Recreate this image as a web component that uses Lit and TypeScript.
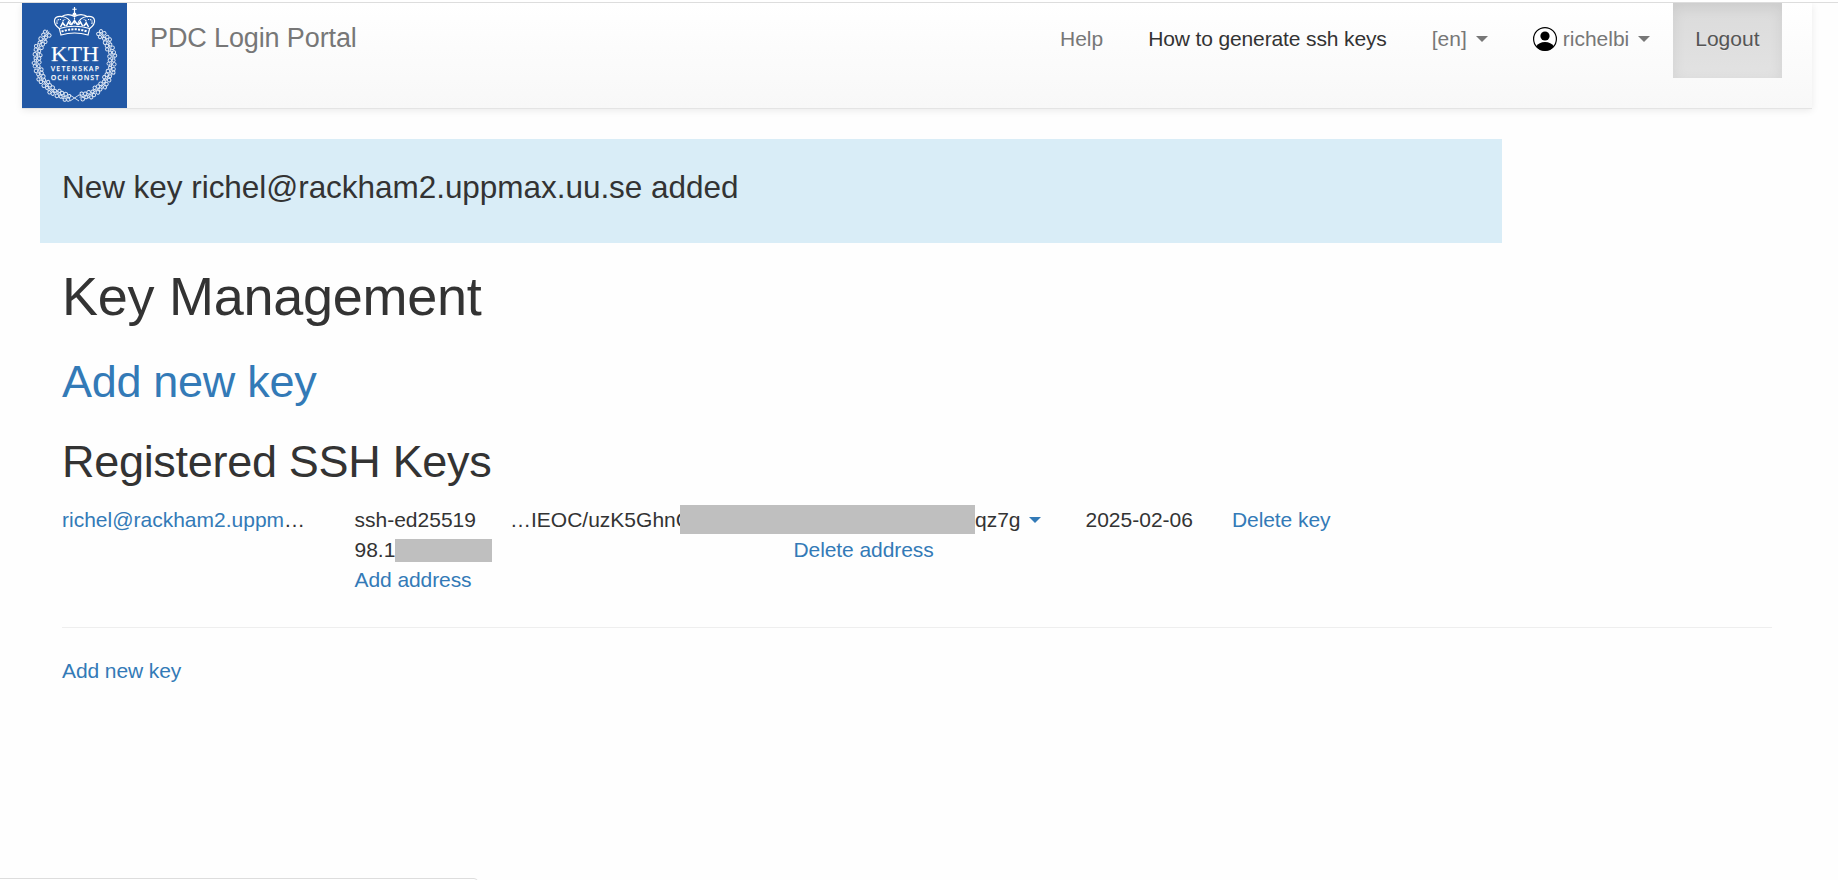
import { LitElement, html, css, svg } from "lit";
import { customElement } from "lit/decorators.js";

@customElement("kth-logo")
class KthLogo extends LitElement {
  static styles = css`
    :host { display: block; width: 105px; height: 105px; }
    svg { display: block; }
    .name { font-family: "Liberation Serif", serif; font-size: 21.5px; }
    .motto { font-family: "Open Sans", sans-serif; font-size: 7.1px; font-weight: 600; }
  `;

  private leaf(deg: number, i: number) {
    const a = (deg * Math.PI) / 180;
    const x = 52.5 + 37.6 * Math.cos(a);
    const y = 57 + 37.6 * Math.sin(a);
    return svg`
      <g transform="translate(${x} ${y}) rotate(${deg + 90}) scale(1 ${i % 2 ? 1 : -1})">
        <circle cx="-2.800" cy="-2.400" r="1.700" />
        <circle cx="0.600" cy="-3.300" r="1.600" />
        <circle cx="-3" cy="1.400" r="1.500" />
        <circle cx="0.800" cy="2.400" r="1.800" />
        <path d="M-4 -0.400L3.500 -0.200M1.500 -1.400L3.600 -2.800" />
      </g>`;
  }

  render() {
    const half = [-43, -31, -19, -7, 5, 17, 29, 41, 53, 65, 77];
    const angles = [...half, ...half.map((d) => 180 - d)];
    return html`<svg width="105" height="105" viewBox="0 0 105 105">
      <rect width="105" height="105" fill="#2258a5" />
      <g fill="none" stroke="#dfe8f4" stroke-width="0.95">${angles.map((d, i) => this.leaf(d, i))}
        <path d="M48 92L57 98M57 92L48 98" />
      </g>
      <g fill="none" stroke="#fff" stroke-width="1.1" transform="translate(52.500 4) scale(1.080 1) translate(-52.500 -4)">
        <path d="M52.500 4v6M50.500 6.200h4" />
        <circle cx="52.500" cy="11.200" r="1.800" fill="#fff" stroke="none" />
        <path d="M39 26C31 20 33 12.500 41 13.500Q48 14.500 50 22M66 26C74 20 72 12.500 64 13.500Q57 14.500 55 22" />
        <path d="M40 14Q46 9.500 52.500 13.500Q59 9.500 65 14" stroke-width="1.400" />
        <path d="M36.500 21Q35 16 40 16.500M68.500 21Q70 16 65 16.500M43 22Q40 17 44 16.500M62 22Q65 17 61 16.500M52.500 13V21" stroke-dasharray="1.400 0.700" />
        <path d="M38.500 25.500Q52.500 21 66.500 25.500L65 32Q52.500 28 40 32Z" />
        <path d="M40.500 28.600Q52.500 24 64.500 28.600" stroke-width="2" stroke-dasharray="2 1.100" />
        <path d="M39.500 24l2-4l2.500 3M49.500 22l3-4.500l3 4.500M61 23l2.500-3l2 4M45 23l2-4l2 3M56 22l2-3l2 4" stroke-width="1.400" />
      </g>
      <g fill="#fff">
        <text class="name" x="28.700" y="57.500" textLength="48.300" lengthAdjust="spacingAndGlyphs">KTH</text>
        <text class="motto" x="28.800" y="68.300" textLength="48.200">VETENSKAP</text>
        <text class="motto" x="28.800" y="77" textLength="48.200">OCH KONST</text>
      </g>
    </svg>`;
  }
}

@customElement("app-root")
class AppRoot extends LitElement {
  static styles = css`
    :host {
      display: block; position: relative; box-sizing: border-box; height: 880px; overflow: hidden;
      background: #fefefe; color: #333;
      font: 21px/30px "Liberation Sans", Arial, sans-serif;
    }
    * { box-sizing: border-box; }
    a { color: #337ab7; text-decoration: none; }
    .edge { height: 3px; background: #fff; border-bottom: 1px solid #ddd; position: relative; }
    .navbar {
      display: flex; height: 106px; margin: 0 26px 0 22px;
      background: linear-gradient(#fff, #f8f8f8); border-bottom: 1px solid #e4e4e4;
      box-shadow: 0 1.5px 7.5px rgba(0, 0, 0, 0.085);
      text-shadow: 0 1px 0 rgba(255, 255, 255, 0.25);
    }
    .clip { overflow: hidden; height: 130px; }
    .brand { margin-left: 23px; padding-top: 20px; font-size: 27px; color: #777; flex: 1; letter-spacing: -0.12px; }
    .nav { display: flex; padding-right: 30px; }
    .nav a { display: flex; align-items: center; height: 75px; padding: 0 22.5px 3px; color: #777; }
    .nav a.hover { color: #333; letter-spacing: -0.13px; }
    .nav a.active {
      color: #555; background: linear-gradient(#dbdbdb, #e2e2e2);
      box-shadow: inset 0 4.5px 13.5px rgba(0, 0, 0, 0.075);
    }
    .caret { display: inline-block; border: 6px solid transparent; border-top-color: currentColor; border-bottom: 0; margin-left: 9px; }
    .keys .caret { margin-left: 8px; }
    .user { margin-right: 6px; }
    .alert { width: 1462px; height: 104px; margin: 6px 0 0 40px; padding: 30px 22px; background: #d9edf7; font-size: 31.5px; line-height: 36px; letter-spacing: -0.04px; }
    main { padding: 0 66px 0 62px; }
    h1, h2 { margin: 0; font-weight: 400; line-height: 1.1; }
    h1 { font-size: 54px; margin-top: 24px; letter-spacing: -0.27px; }
    h2 { font-size: 45px; letter-spacing: -0.3px; }
    .add { margin-top: 31px; }
    .reg { margin-top: 30px; }
    .keys { display: grid; grid-template-columns: 292.5px 155.5px 575.5px 146.5px auto; margin-top: 19px; height: 90px; }
    .addr { display: grid; grid-column: 2 / -1; grid-template-columns: 439px auto; }
    .line { display: flex; align-items: center; white-space: nowrap; }
    .addr a, .delete { letter-spacing: -0.08px; }
    .mask { background: #bfbfbf; position: relative; }
    .mask.key { width: 295px; height: 29px; margin: -2px 0 0 0; }
    .mask.ip { width: 97px; height: 23px; }
    .keytext { width: 170px; }
    hr { margin: 32px 0 28px; border: 0; border-top: 1px solid #eee; }
    .more { letter-spacing: -0.1px; }
    .status { position: absolute; left: -2px; bottom: -3px; width: 480px; height: 5px; border: 1px solid #ddd; border-radius: 0 4px 0 0; background: #fff; }
  `;

  render() {
    return html`
      <div class="edge"></div>
      <div class="clip">
        <nav class="navbar">
          <kth-logo></kth-logo>
          <div class="brand">PDC Login Portal</div>
          <div class="nav">
            <a>Help</a>
            <a class="hover">How to generate ssh keys</a>
            <a>[en]<span class="caret"></span></a>
            <a><svg class="user" width="24" height="24" viewBox="0 0 24 24">
                <circle cx="12" cy="12" r="11.400" fill="#fff" stroke="#000" stroke-width="1.200" />
                <circle cx="12" cy="9" r="4.600" />
                <path d="M3 19.600Q6 15 12 15T21 19.600A11.800 11.800 0 0 1 3 19.600Z" />
              </svg>richelbi<span class="caret"></span></a>
            <a class="active">Logout</a>
          </div>
        </nav>
      </div>
      <div class="alert">New key richel@rackham2.uppmax.uu.se added</div>
      <main>
        <h1>Key Management</h1>
        <h2 class="add"><a>Add new key</a></h2>
        <h2 class="reg">Registered SSH Keys</h2>
        <section class="keys">
          <div class="line"><a>richel@rackham2.uppm</a>…</div>
          <div class="line">ssh-ed25519</div>
          <div class="line"><span class="keytext">…IEOC/uzK5GhnC</span><span class="mask key"></span>qz7g<a class="line"><span class="caret"></span></a></div>
          <div class="line">2025-02-06</div>
          <div class="line"><a class="delete">Delete key</a></div>
          <div class="addr"><div class="line">98.1<span class="mask ip"></span></div><div class="line"><a>Delete address</a></div></div>
          <div class="addr"><div class="line"><a>Add address</a></div></div>
        </section>
        <hr />
        <a class="more">Add new key</a>
      </main>
      <div class="status"></div>
    `;
  }
}
